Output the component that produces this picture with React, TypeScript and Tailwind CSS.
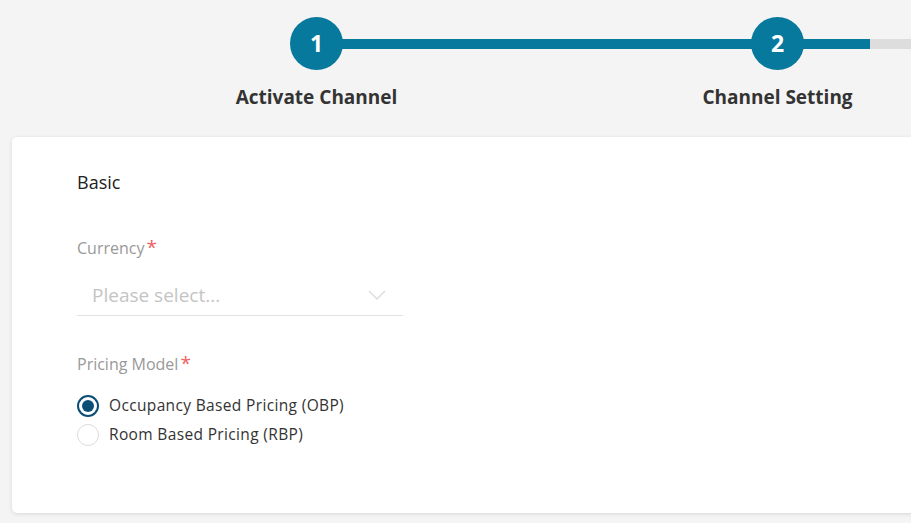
import React, { useState } from "react";

const steps = [
  { n: 1, label: "Activate Channel" },
  { n: 2, label: "Channel Setting" },
];

function Stepper() {
  return (
    <div className="flex pl-[86px] pt-[17px] h-[137px]">
      {steps.map((s, i) => (
        <div key={s.n} className="relative w-[461px] shrink-0 flex flex-col items-center">
          {/* connector to next step */}
          <div className="absolute left-1/2 top-[22px] w-[461px] h-[10px] bg-[#dddddd]">
            <div className={i === 0 ? "h-full w-full bg-[#06799c]" : "h-full w-[92px] bg-[#06799c]"} />
          </div>
          <div className="relative z-10 w-[53px] h-[53px] rounded-full bg-[#06799c] text-white flex items-center justify-center text-[23px] font-bold">
            {s.n}
          </div>
          <div className="mt-[13px] text-[19px] font-bold text-[#333333] whitespace-nowrap">{s.label}</div>
        </div>
      ))}
    </div>
  );
}

function Radio({ checked, label, onClick }: { checked: boolean; label: string; onClick: () => void }) {
  return (
    <label className="flex items-center gap-[10px] h-[29px] cursor-pointer" onClick={onClick}>
      <span
        className={
          checked
            ? "w-[22px] h-[22px] rounded-full border-2 border-[#0b4f75] flex items-center justify-center"
            : "w-[22px] h-[22px] rounded-full border border-[#dcdcdc] bg-white"
        }
      >
        {checked && <span className="w-[12px] h-[12px] rounded-full bg-[#0b4f75]" />}
      </span>
      <span className="text-[15.5px] tracking-[0.35px] text-[#333333]">{label}</span>
    </label>
  );
}

export default function App() {
  const [model, setModel] = useState("obp");

  return (
    <div
      className="w-[911px] h-[523px] overflow-hidden bg-[#f4f4f4]"
      style={{ fontFamily: '"Open Sans", "Noto Sans", sans-serif' }}
    >
      <Stepper />

      <div className="ml-[12px] w-[920px] h-[376px] bg-white rounded-[5px] shadow-[0_1px_4px_rgba(0,0,0,0.12)] pl-[65px] pt-[33px]">
        <div className="text-[18px] text-[#222222] leading-[24px]">Basic</div>

        <div className="mt-[42px] text-[16px] text-[#999999] leading-[22px]">
          Currency<span className="text-[#f06060] text-[19px] ml-[2px]">*</span>
        </div>
        <div className="mt-[16px] w-[326px] h-[41px] border-b border-[#e2e2e2] flex items-center justify-between pl-[15px] pr-[17px]">
          <span className="text-[19px] text-[#c4c4c4]">Please select...</span>
          <svg width="18" height="10" viewBox="0 0 18 10" fill="none">
            <path d="M1 1l8 8 8-8" stroke="#dddddd" strokeWidth="1.5" />
          </svg>
        </div>

        <div className="mt-[36px] text-[16px] text-[#999999] leading-[22px]">
          Pricing Model<span className="text-[#f06060] text-[19px] ml-[2px]">*</span>
        </div>
        <div className="mt-[16px] flex flex-col">
          <Radio checked={model === "obp"} label="Occupancy Based Pricing (OBP)" onClick={() => setModel("obp")} />
          <Radio checked={model === "rbp"} label="Room Based Pricing (RBP)" onClick={() => setModel("rbp")} />
        </div>
      </div>
    </div>
  );
}
